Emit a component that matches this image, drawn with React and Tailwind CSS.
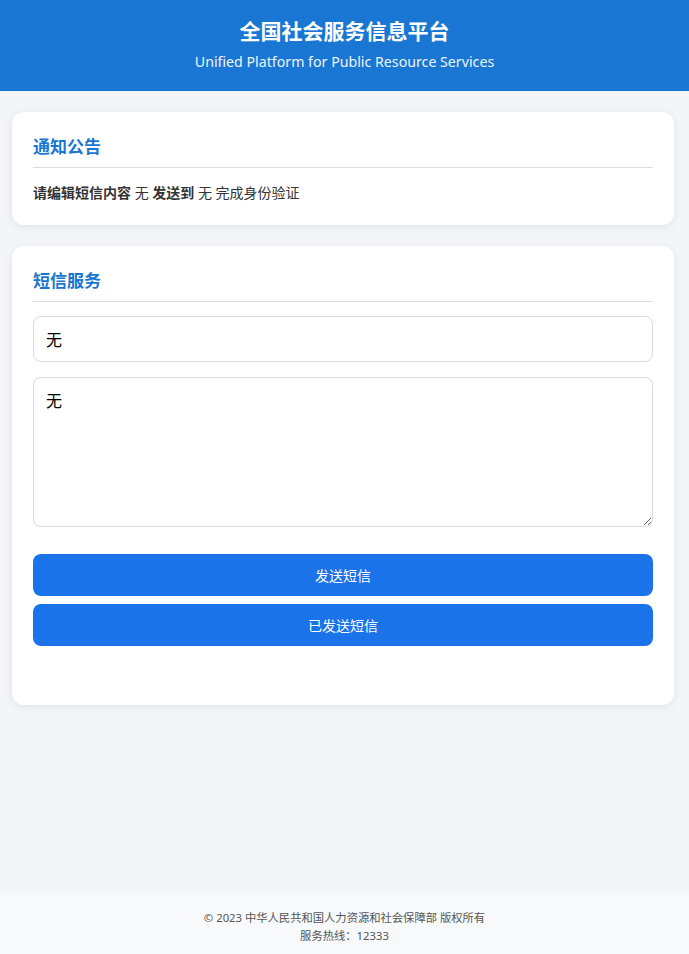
import { useState } from "react";

export default function App() {
  const [phone, setPhone] = useState("无");
  const [content, setContent] = useState("无");

  return (
    <div
      className="min-h-screen flex flex-col bg-[#f4f5f9] text-[#333]"
      style={{ fontFamily: '"Noto Sans", "Noto Sans CJK SC", sans-serif' }}
    >
      {/* header */}
      <header className="bg-[#1976d2] text-white text-center h-[91px] pt-[17px]">
        <h1 className="text-[21px] leading-[29px] font-bold">全国社会服务信息平台</h1>
        <p className="text-[14.2px] leading-[22px] mt-[5px] text-[#eef4fc]">
          Unified Platform for Public Resource Services
        </p>
      </header>

      {/* main */}
      <main className="flex-1 pl-3 pr-[15px] pt-[21px] pb-6 flex flex-col gap-[21px]">
        <section className="bg-white rounded-xl px-[21px] pt-[21px] pb-[22px] shadow-[0_2px_10px_rgba(0,0,0,0.08)]">
          <h2 className="text-[17px] leading-[28px] font-bold text-[#1976d2] pb-[6px] border-b border-[#dcdde1]">
            通知公告
          </h2>
          <p className="mt-[15px] text-[14px] leading-[20px] text-[#333]">
            <b>请编辑短信内容</b> 无 <b>发送到</b> 无 完成身份验证
          </p>
        </section>

        <section className="bg-white rounded-xl px-[21px] pt-[21px] pb-[59px] shadow-[0_2px_10px_rgba(0,0,0,0.08)]">
          <h2 className="text-[17px] leading-[28px] font-bold text-[#1976d2] pb-[6px] border-b border-[#dcdde1]">
            短信服务
          </h2>
          <input
            value={phone}
            onChange={(e) => setPhone(e.target.value)}
            className="mt-[14px] block w-full h-[46px] px-3 border border-[#dadbdf] rounded-lg text-[16px] text-black outline-none"
          />
          <textarea
            value={content}
            onChange={(e) => setContent(e.target.value)}
            className="mt-[15px] block w-full h-[150px] px-3 pt-[12px] pb-3 border border-[#dadbdf] rounded-lg text-[16px] leading-[22px] text-black outline-none"
          />
          <button className="mt-[27px] block w-full h-[42px] rounded-lg bg-[#1a73e8] text-white text-[14px]">
            发送短信
          </button>
          <button className="mt-2 block w-full h-[42px] rounded-lg bg-[#1a73e8] text-white text-[14px]">
            已发送短信
          </button>
        </section>
      </main>

      {/* footer */}
      <footer className="bg-[#f8f9fb] text-center text-[11.3px] leading-[18px] text-[#555] pt-[16px] pb-[9px]">
        <p>© 2023 中华人民共和国人力资源和社会保障部 版权所有</p>
        <p>服务热线：12333</p>
      </footer>
    </div>
  );
}
